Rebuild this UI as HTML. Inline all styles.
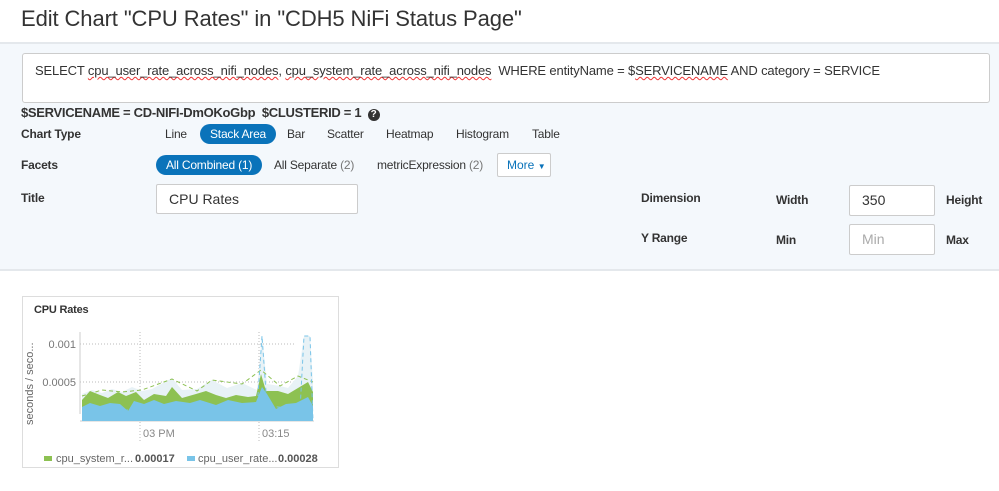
<!DOCTYPE html>
<html><head><meta charset="utf-8"><style>
*{margin:0;padding:0;box-sizing:border-box}
body{width:999px;height:491px;overflow:hidden;background:#fff;font-family:"Liberation Sans",Arial,sans-serif;color:#333;position:relative}
.a{position:absolute;white-space:nowrap}
.b{font-weight:bold;font-size:12px;color:#333;letter-spacing:-0.2px}
.n{font-size:12px;color:#333;letter-spacing:-0.2px}
.pill{position:absolute;background:#0a73ba;color:#fff;border-radius:11px;font-size:12px;height:20px;line-height:20px;padding:0 10px;letter-spacing:-0.2px}
.inp{position:absolute;background:#fff;border:1px solid #ccc;border-radius:2px;font-size:14px;padding-left:12px}
.g{color:#777}
.w{text-decoration:underline wavy #e33;text-decoration-thickness:1px}
</style></head><body>
<div class="a" style="left:21px;top:6px;font-size:22px;color:#333;letter-spacing:-0.1px">Edit Chart "CPU Rates" in "CDH5 NiFi Status Page"</div>
<div class="a" style="left:0;top:42px;width:999px;height:229px;background:#f4f8fc;border-top:2px solid #e4e8ec;border-bottom:2px solid #e4e8ec"></div>
<div class="inp" style="left:22px;top:53px;width:968px;height:50px;border-radius:3px;font-size:13px;padding-top:9px;color:#333;letter-spacing:-0.15px">SELECT <span class="w">cpu_user_rate_across_nifi_nodes</span>, <span class="w">cpu_system_rate_across_nifi_nodes</span>&nbsp; WHERE entityName = $<span class="w">SERVICENAME</span> AND category = SERVICE</div>
<div class="a" style="left:21px;top:105px;font-size:13px;font-weight:bold;letter-spacing:-0.3px">$SERVICENAME = CD-NIFI-DmOKoGbp&nbsp; $CLUSTERID = 1 <span style="display:inline-block;width:12px;height:12px;border-radius:6px;background:#333;color:#fff;font-size:10px;text-align:center;line-height:12px;vertical-align:0px;margin-left:3px;letter-spacing:0">?</span></div>
<div class="a b" style="left:21px;top:127px">Chart Type</div>
<div class="a n" style="left:165px;top:127px">Line</div>
<div class="pill" style="left:200px;top:124px">Stack Area</div>
<div class="a n" style="left:287px;top:127px">Bar</div>
<div class="a n" style="left:327px;top:127px">Scatter</div>
<div class="a n" style="left:386px;top:127px">Heatmap</div>
<div class="a n" style="left:456px;top:127px">Histogram</div>
<div class="a n" style="left:532px;top:127px">Table</div>
<div class="a b" style="left:21px;top:158px">Facets</div>
<div class="pill" style="left:156px;top:155px">All Combined (1)</div>
<div class="a n" style="left:274px;top:158px">All Separate <span class="g">(2)</span></div>
<div class="a n" style="left:377px;top:158px">metricExpression <span class="g">(2)</span></div>
<div class="a" style="left:497px;top:153px;width:54px;height:24px;background:#fff;border:1px solid #ccc;border-radius:2px;color:#0a73ba;font-size:12px;line-height:22px;padding-left:9px">More <span style="font-size:8px">▼</span></div>
<div class="a b" style="left:21px;top:191px">Title</div>
<div class="inp" style="left:156px;top:184px;width:202px;height:30px;line-height:28px">CPU Rates</div>
<div class="a b" style="left:641px;top:191px">Dimension</div>
<div class="a b" style="left:776px;top:193px">Width</div>
<div class="inp" style="left:849px;top:185px;width:86px;height:31px;line-height:29px">350</div>
<div class="a b" style="left:946px;top:193px">Height</div>
<div class="a b" style="left:641px;top:231px">Y Range</div>
<div class="a b" style="left:776px;top:233px">Min</div>
<div class="inp" style="left:849px;top:224px;width:86px;height:31px;line-height:29px;color:#aaa">Min</div>
<div class="a b" style="left:946px;top:233px">Max</div>

<div class="a" style="left:22px;top:296px;width:317px;height:172px;border:1px solid #ddd"></div>
<div class="a b" style="left:34px;top:304px;font-size:11px">CPU Rates</div>
<div class="a" style="left:24px;top:425px;transform:rotate(-90deg);transform-origin:0 0;font-size:11px;color:#666">seconds / seco...</div>
<svg class="a" style="left:22px;top:296px" width="317" height="172">
<g stroke="#bbb" stroke-dasharray="1,2" stroke-width="1">
<line x1="58" y1="48" x2="274" y2="48"/><line x1="58" y1="86" x2="274" y2="86"/>
<line x1="118" y1="36" x2="118" y2="147"/><line x1="237" y1="36" x2="237" y2="147"/>
</g>
<line x1="58" y1="36" x2="58" y2="118" stroke="#ccc"/>
<line x1="58" y1="125" x2="292" y2="125" stroke="#ccc"/>
<text x="54" y="52" font-size="11" fill="#777" text-anchor="end">0.001</text>
<text x="54" y="90" font-size="11" fill="#777" text-anchor="end">0.0005</text>
<text x="121" y="141" font-size="11" fill="#888">03 PM</text>
<text x="240" y="141" font-size="11" fill="#888">03:15</text>
<path d="M60 98 L70 94 L80 97 L90 93 L100 96 L110 91 L120 95 L130 93 L150 82 L160 94 L175 93 L190 84 L205 92 L220 87 L235 94 L240 40 L245 88 L258 90 L266 92 L276 80 L282 40 L288 40 L291 86 L291 125 L60 125Z" fill="#e8f2f6"/>
<path d="M60 104 L68 95 L78 99 L86 102 L96 96 L104 100 L114 96 L122 104 L132 98 L144 100 L150 91 L160 102 L174 98 L184 95 L194 99 L204 102 L214 99 L226 101 L234 100 L239 78 L244 95 L256 95 L266 98 L276 92 L286 86 L291 96 L291 125 L60 125Z" fill="#8dc152"/>
<path d="M60 111 L68 107 L78 110 L88 107 L98 108 L106 115 L112 105 L122 108 L132 104 L142 108 L154 105 L168 107 L178 104 L194 109 L206 104 L220 107 L234 106 L240 91 L245 98 L254 113 L264 108 L274 107 L286 101 L291 110 L291 125 L60 125Z" fill="#79c4e8"/>
<path fill="none" stroke="#8dc152" stroke-dasharray="4,3" d="M60 100 L80 94 L100 96 L120 94 L150 83 L175 95 L190 84 L220 88 L239 74 L258 90 L276 80 L291 86"/>
<path fill="none" stroke="#79c4e8" stroke-dasharray="4,3" d="M60 114 L235 114 L240 40 L245 110 L266 112 L278 114 L282 40 L288 40 L291 125"/>
<rect x="22" y="160" width="8" height="5" fill="#8dc152"/>
<text x="34" y="166" font-size="11" fill="#666">cpu_system_r...</text>
<text x="113" y="166" font-size="11" fill="#555" font-weight="bold">0.00017</text>
<rect x="165" y="160" width="8" height="5" fill="#79c4e8"/>
<text x="176" y="166" font-size="11" fill="#666">cpu_user_rate...</text>
<text x="256" y="166" font-size="11" fill="#555" font-weight="bold">0.00028</text>
</svg>
</body></html>
